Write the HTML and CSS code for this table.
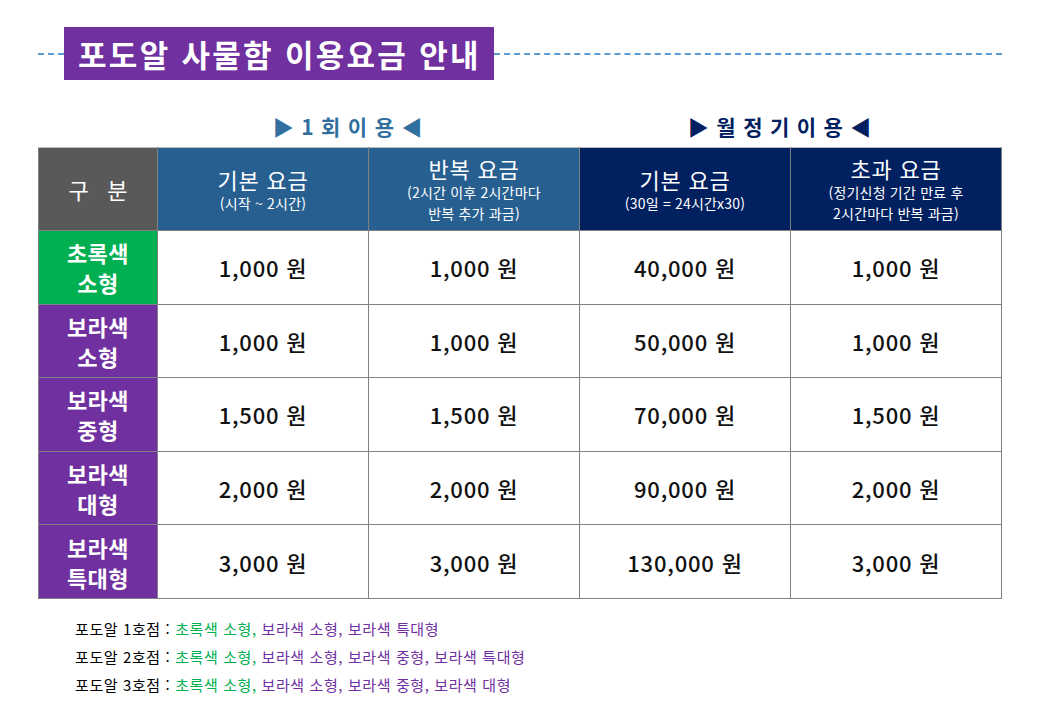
FILE: index.html
```html
<!DOCTYPE html>
<html lang="ko">
<head>
<meta charset="utf-8">
<link rel="stylesheet" href="styles.css">
</head>
<body>
<div class="page">
  <div class="title-row">
    <div class="dash dash-left"></div>
    <h1 class="title">포도알 사물함 이용요금 안내</h1>
    <div class="dash dash-right"></div>
  </div>
  <div class="groups">
    <div class="group-spacer"></div>
    <div class="group g1">▶ 1 회 이 용 ◀</div>
    <div class="group g2">▶ 월 정 기 이 용 ◀</div>
  </div>
  <table class="fees">
    <thead>
      <tr>
        <th class="h-gray">구&nbsp;&nbsp;&nbsp;분</th>
        <th class="h-blue"><div class="main">기본 요금</div><div class="sub">(시작 ~ 2시간)</div></th>
        <th class="h-blue"><div class="main">반복 요금</div><div class="sub">(2시간 이후 2시간마다<br>반복 추가 과금)</div></th>
        <th class="h-navy"><div class="main">기본 요금</div><div class="sub">(30일 = 24시간x30)</div></th>
        <th class="h-navy"><div class="main">초과 요금</div><div class="sub">(정기신청 기간 만료 후<br>2시간마다 반복 과금)</div></th>
      </tr>
    </thead>
    <tbody>
      <tr><th class="r-green">초록색<br>소형</th><td>1,000 원</td><td>1,000 원</td><td>40,000 원</td><td>1,000 원</td></tr>
      <tr><th class="r-purple">보라색<br>소형</th><td>1,000 원</td><td>1,000 원</td><td>50,000 원</td><td>1,000 원</td></tr>
      <tr><th class="r-purple">보라색<br>중형</th><td>1,500 원</td><td>1,500 원</td><td>70,000 원</td><td>1,500 원</td></tr>
      <tr><th class="r-purple">보라색<br>대형</th><td>2,000 원</td><td>2,000 원</td><td>90,000 원</td><td>2,000 원</td></tr>
      <tr><th class="r-purple">보라색<br>특대형</th><td>3,000 원</td><td>3,000 원</td><td>130,000 원</td><td>3,000 원</td></tr>
    </tbody>
  </table>
  <ul class="notes">
    <li>포도알 1호점 : <span class="green">초록색 소형,</span> <span class="purple">보라색 소형, 보라색 특대형</span></li>
    <li>포도알 2호점 : <span class="green">초록색 소형,</span> <span class="purple">보라색 소형, 보라색 중형, 보라색 특대형</span></li>
    <li>포도알 3호점 : <span class="green">초록색 소형,</span> <span class="purple">보라색 소형, 보라색 중형, 보라색 대형</span></li>
  </ul>
</div>
</body>
</html>
```

FILE: styles.css
```css
* { box-sizing: border-box; }
html, body { margin: 0; padding: 0; background: #fff; }
body {
  font-family: "Noto Sans CJK KR", "Noto Sans", sans-serif;
  color: #000;
  width: 1040px;
  height: 720px;
  overflow: hidden;
}
.page { padding: 27px 0 0 38px; width: 1040px; }

.title-row { display: flex; align-items: center; width: 964px; }
.dash { height: 0; border-top: 2px dashed #5B9BD5; }
.dash-left { width: 26px; }
.dash-right { flex: 1; }
.title {
  margin: 0;
  background: #7030A0;
  color: #fff;
  font-size: 31px;
  font-weight: 700;
  height: 53px;
  line-height: 53px;
  width: 430px;
  padding-left: 14px;
  letter-spacing: 2.3px;
  white-space: nowrap;
}

.groups { display: flex; margin-top: 24px; height: 43px; align-items: center; }
.group-spacer { width: 99px; }
.group { font-size: 21px; font-weight: 700; text-align: center; letter-spacing: 0.8px; }
.g1 { width: 422px; color: #31709E; }
.g2 { width: 442px; color: #002060; }

.fees {
  border-collapse: collapse;
  width: 964px;
  table-layout: fixed;
}
.fees th, .fees td {
  border: 1px solid #808080;
  text-align: center;
  vertical-align: middle;
  padding: 0;
}
.fees thead tr { height: 83px; }
.fees thead th { color: #fff; font-weight: 400; border-top-color: #bfbfbf; }
.fees thead th:first-child { width: 119px; }
.h-gray { background: #595959; font-size: 22px; letter-spacing: 0; }
.h-blue { background: #285F91; }
.h-navy { background: #002060; }
.main { font-size: 22px; line-height: 28px; letter-spacing: 0.8px; }
.sub { font-size: 14px; line-height: 21px; letter-spacing: 0.2px; }

.fees tbody tr { height: 73.6px; }
.fees tbody th {
  color: #fff;
  font-size: 22px;
  font-weight: 700;
  line-height: 30px;
  letter-spacing: 0.5px;
}
.r-green { background: #00B050; }
.r-purple { background: #7030A0; }
.fees td { font-size: 22px; font-weight: 500; color: #111; letter-spacing: 0.8px; }

.notes {
  list-style: none;
  margin: 16px 0 0 0;
  padding: 0 0 0 37px;
  font-size: 15px;
  line-height: 28px;
  letter-spacing: 0.6px;
}
.green { color: #00B050; }
.purple { color: #7030A0; }
```
